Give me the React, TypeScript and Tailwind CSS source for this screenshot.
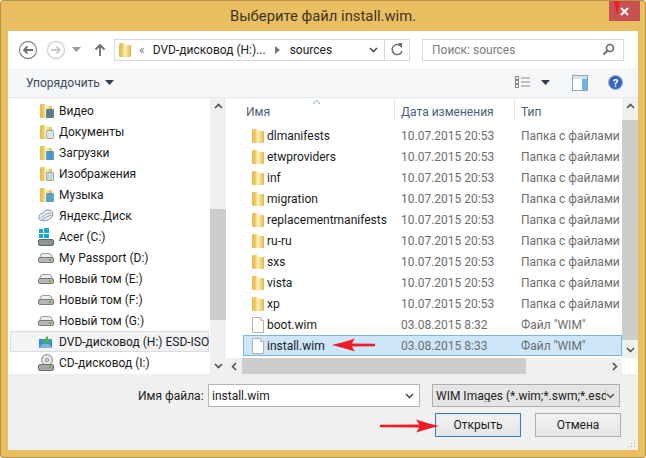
import { ReactNode } from 'react';

const FolderIcon = () => (
  <svg width="14" height="16" viewBox="0 0 14 16" className="shrink-0">
    <defs>
      <linearGradient id="folderFill" x1="0" y1="0" x2="1" y2="0">
        <stop offset="0" stopColor="#e3b94e" />
        <stop offset="0.3" stopColor="#eecb66" />
        <stop offset="0.48" stopColor="#fdf3c8" />
        <stop offset="0.7" stopColor="#f4da88" />
        <stop offset="1" stopColor="#e0b64c" />
      </linearGradient>
    </defs>
    <path d="M1 3 L1 14 Q1 15 2 15 L12 15 Q13 15 13 14 L13 4 Q13 3 12 3 L8 3 L6 1 L2 1 Q1 1 1 3Z" fill="url(#folderFill)" />
  </svg>
);

const PlacesIcon = ({ overlay }: { overlay: string }) => (
  <div className="relative w-[15px] h-[16px] shrink-0">
    <FolderIcon />
    <div className={`absolute right-0 bottom-[1px] w-[8px] h-[9px] rounded-[1px] opacity-85 ${overlay}`} />
  </div>
);

const FileIcon = () => (
  <svg width="14" height="16" viewBox="0 0 14 16" className="shrink-0">
    <path d="M1.5 0.5 H9.5 L12.5 3.5 V15.5 H1.5Z" fill="#fdfdfd" stroke="#b0b0b0" />
    <path d="M9.5 0.5 V3.5 H12.5" fill="#eee" stroke="#bdbdbd" />
  </svg>
);

const DriveIcon = () => (
  <svg width="16" height="10" viewBox="0 0 16 10" className="shrink-0">
    <path d="M2 4 Q2 0.5 5 0.5 H11 Q14 0.5 14 4 L15 6 H1Z" fill="#ededed" stroke="#9a9a9a" />
    <rect x="0.5" y="4.5" width="15" height="5" rx="1.5" fill="#b4b7b4" stroke="#777a77" />
    <rect x="11" y="6" width="2" height="2" fill="#5fb04a" />
  </svg>
);

const AcerIcon = () => (
  <svg width="16" height="18" viewBox="0 0 16 18" className="shrink-0">
    <rect x="1" y="1" width="4" height="4" fill="#16a9c9" />
    <rect x="6" y="0" width="5" height="5" fill="#16a9c9" />
    <rect x="1" y="6" width="4" height="4" fill="#16a9c9" />
    <rect x="6" y="6" width="5" height="4" fill="#16a9c9" />
    <rect x="0.5" y="11.5" width="15" height="6" rx="1.5" fill="#8b9496" stroke="#5e6668" />
  </svg>
);

const CloudIcon = () => (
  <svg width="16" height="15" viewBox="0 0 16 15" className="shrink-0">
    <path d="M1 11 Q0 6 5 5 Q7 1 11 2 Q15 3 15 6 Q15 10 10 12 Q4 14 1 11Z" fill="#e6edf2" stroke="#8598a5" />
    <path d="M3 10 Q7 5 13 5 M4 12 Q8 8 14 7" fill="none" stroke="#9aadb9" />
  </svg>
);

const DvdIcon = () => (
  <svg width="14" height="12" viewBox="0 0 14 12" className="shrink-0">
    <rect x="0" y="3" width="13" height="9" fill="#3d8fd1" />
    <path d="M0 12 L3 8 H10 L13 12Z" fill="#7cb8e4" />
    <path d="M9 0 L9 3 L12 3 L7 8 L3 5 L6 5 Q6 1 9 0Z" fill="#4cb848" />
  </svg>
);

const CdIcon = () => (
  <svg width="16" height="17" viewBox="0 0 16 17" className="shrink-0">
    <circle cx="9" cy="6" r="5.5" fill="#e4e4e4" stroke="#8a8a8a" />
    <circle cx="9" cy="6" r="1.5" fill="#fff" stroke="#888" />
    <rect x="0.5" y="10.5" width="15" height="6" rx="1.5" fill="#a5a9a5" stroke="#6e716e" />
    <rect x="11" y="12" width="2" height="2" fill="#5fb04a" />
  </svg>
);

const Caret = ({ className }: { className: string }) => (
  <svg width="9" height="5" viewBox="0 0 9 5" className={className}>
    <path d="M0 0 H9 L4.5 5Z" fill="currentColor" />
  </svg>
);

const Chevron = ({ dir }: { dir: 'up' | 'down' | 'left' | 'right' }) => {
  const d = {
    up: 'M1 6 L4.5 2.5 L8 6',
    down: 'M1 3 L4.5 6.5 L8 3',
    left: 'M6 1 L2.5 4.5 L6 8',
    right: 'M3 1 L6.5 4.5 L3 8',
  }[dir];
  return (
    <svg width="9" height="9" viewBox="0 0 9 9">
      <path d={d} fill="none" stroke="#505050" strokeWidth="1.6" />
    </svg>
  );
};

// tail tapers towards the back, head has concave barbs
const RedArrow = ({ flip, width }: { flip?: boolean; width: number }) => {
  const barb = width - 23;
  return (
    <svg width={width} height="14" viewBox={`0 0 ${width} 14`} style={{ transform: flip ? 'scaleX(-1)' : undefined }}>
      <path
        d={`M0 5.8 L${barb + 3} 5.6 Q${barb + 2} 3 ${barb} 0.5 Q${width - 9} 5 ${width} 7 Q${width - 9} 9 ${barb} 13.5 Q${barb + 2} 11 ${barb + 3} 8.4 L0 8.2Z`}
        fill="#ee1c25"
      />
    </svg>
  );
};

const navItems: { label: string; icon: ReactNode; active?: boolean }[] = [
  { label: 'Видео', icon: <PlacesIcon overlay="bg-[#3f6f8f]" /> },
  { label: 'Документы', icon: <PlacesIcon overlay="bg-[#dfe6ee] border border-[#8da2b5]" /> },
  { label: 'Загрузки', icon: <PlacesIcon overlay="bg-[#2f8fd0]" /> },
  { label: 'Изображения', icon: <PlacesIcon overlay="bg-[#b9d8e6] border border-[#8da2b5]" /> },
  { label: 'Музыка', icon: <PlacesIcon overlay="bg-[#3a9ac9]" /> },
  { label: 'Яндекс.Диск', icon: <CloudIcon /> },
  { label: 'Acer (C:)', icon: <AcerIcon /> },
  { label: 'My Passport (D:)', icon: <DriveIcon /> },
  { label: 'Новый том (E:)', icon: <DriveIcon /> },
  { label: 'Новый том (F:)', icon: <DriveIcon /> },
  { label: 'Новый том (G:)', icon: <DriveIcon /> },
  { label: 'DVD-дисковод (H:) ESD-ISO', icon: <DvdIcon />, active: true },
  { label: 'CD-дисковод (I:)', icon: <CdIcon /> },
];

const folders = ['dlmanifests', 'etwproviders', 'inf', 'migration', 'replacementmanifests', 'ru-ru', 'sxs', 'vista', 'xp'];

const FileRow = ({ name, date, type, folder, selected }: { name: string; date: string; type: string; folder?: boolean; selected?: boolean }) => (
  <div className={`flex items-center h-[21px] ml-[17px] border ${selected ? 'bg-[#cde6f9] border-[#7db4dd]' : 'border-transparent'}`}>
    <div className="w-[23px] pl-[4px] flex justify-center shrink-0">{folder ? <FolderIcon /> : <FileIcon />}</div>
    <div className="w-[134px] text-[#1a1a1a] whitespace-nowrap">{name}</div>
    <div className="w-[120px] text-[#6d6d6d] whitespace-nowrap">{date}</div>
    <div className="text-[#6d6d6d] whitespace-nowrap">{type}</div>
  </div>
);

export default function App() {
  return (
    <div className="relative w-[646px] h-[458px] overflow-hidden flex flex-col bg-[#e9bf62] border border-[#b8944a] rounded-[3px] text-[12px] leading-none text-[#1c1c1c] font-['Roboto','Open_Sans',sans-serif]">
      {/* title bar */}
      <div className="relative flex items-center justify-center h-[30px] shrink-0 text-[14.8px] text-[#3d3526]">
        Выберите файл install.wim.
        <div className="absolute right-[5px] top-0 w-[31px] h-[20px] bg-[#c75050] flex items-center justify-center">
          <svg width="9" height="9" viewBox="0 0 9 9">
            <path d="M1 1 L8 8 M8 1 L1 8" stroke="#fff" strokeWidth="2" />
          </svg>
        </div>
        <svg width="6" height="15" viewBox="0 0 6 15" className="absolute left-[613px] top-0">
          <path d="M0 0 H6 L3 15Z" fill="#ee1c25" />
        </svg>
      </div>

      <div className="flex flex-col mx-[7px] w-[630px] h-[419px] bg-[#f0f0f0]">
        {/* address bar */}
        <div className="flex items-center h-[37px] bg-white shrink-0 pl-[10px]">
          <svg width="20" height="20" viewBox="0 0 20 20" className="shrink-0">
            <circle cx="10" cy="10" r="8.5" fill="#fff" stroke="#8c8c8c" strokeWidth="1.3" />
            <path d="M15 10 H6 M9.5 6.5 L6 10 L9.5 13.5" fill="none" stroke="#6e6e6e" strokeWidth="1.8" />
          </svg>
          <svg width="20" height="20" viewBox="0 0 20 20" className="shrink-0 ml-[8px]">
            <circle cx="10" cy="10" r="8.5" fill="#fff" stroke="#cfcfcf" strokeWidth="1.3" />
            <path d="M5 10 H14 M10.5 6.5 L14 10 L10.5 13.5" fill="none" stroke="#c8c8c8" strokeWidth="1.8" />
          </svg>
          <Caret className="ml-[6px] text-[#9a9a9a] shrink-0" />
          <svg width="12" height="14" viewBox="0 0 12 14" className="ml-[13px] shrink-0">
            <path d="M6 13 V2 M1.5 6.5 L6 2 L10.5 6.5" fill="none" stroke="#6e6e6e" strokeWidth="1.8" />
          </svg>
          <div className="flex items-center ml-[8px] w-[296px] h-[22px] border border-[#d9d9d9] bg-white shrink-0">
            <div className="ml-[3px]">
              <FolderIcon />
            </div>
            <span className="ml-[7px] text-[#7a7a7a]">«</span>
            <span className="ml-[8px] whitespace-nowrap">DVD-дисковод (H:)...</span>
            <svg width="5" height="8" viewBox="0 0 5 8" className="ml-[9px] shrink-0">
              <path d="M0 0 L5 4 L0 8Z" fill="#777" />
            </svg>
            <span className="ml-[10px]">sources</span>
            <div className="ml-auto w-[9px] mr-[6px]">
              <Chevron dir="down" />
            </div>
            <div className="flex items-center justify-center w-[25px] h-full border-l border-[#d9d9d9] shrink-0">
              <svg width="13" height="13" viewBox="0 0 13 13">
                <path d="M10.5 4 A5 5 0 1 0 11 8" fill="none" stroke="#6e6e6e" strokeWidth="1.5" />
                <path d="M7 0 L11 0 L11 5Z" fill="#6e6e6e" />
              </svg>
            </div>
          </div>
          <div className="flex items-center justify-between ml-[12px] w-[202px] h-[22px] border border-[#d9d9d9] bg-white pl-[9px] pr-[8px] text-[#7d7d7d] shrink-0">
            <span>Поиск: sources</span>
            <svg width="13" height="13" viewBox="0 0 13 13">
              <circle cx="8" cy="5" r="3.5" fill="none" stroke="#6a6a6a" strokeWidth="1.7" />
              <path d="M5.5 7.5 L1.5 11.5" stroke="#6a6a6a" strokeWidth="2" />
            </svg>
          </div>
        </div>

        {/* command bar */}
        <div className="flex items-center h-[30px] bg-[#f5f6f7] border-b border-[#e4e6e8] shrink-0 pl-[18px] pr-[14px] text-[#3c4a5c]">
          <span>Упорядочить</span>
          <Caret className="ml-[5px] text-[#2e3d52]" />
          <div className="ml-auto flex items-center">
            <svg width="16" height="13" viewBox="0 0 16 13">
              <g fill="none" stroke="#8a8a8a">
                <rect x="0.5" y="0.5" width="3" height="3" />
                <rect x="0.5" y="4.5" width="3" height="3" />
                <rect x="0.5" y="8.5" width="3" height="3" />
              </g>
              <path d="M6 2 H15 M6 6 H15 M6 10 H15" stroke="#8a8a8a" />
            </svg>
            <Caret className="ml-[10px] text-[#2e3d52]" />
            <svg width="16" height="16" viewBox="0 0 16 16" className="ml-[22px]">
              <rect x="0.5" y="0.5" width="15" height="15" fill="#fff" stroke="#8fa4b5" />
              <rect x="1" y="1" width="14" height="3" fill="#d9e2ea" />
              <rect x="10" y="4" width="5" height="11" fill="#6db2e8" />
            </svg>
            <svg width="15" height="15" viewBox="0 0 15 15" className="ml-[20px] mr-[1px]">
              <circle cx="7.5" cy="7.5" r="7" fill="#3566b8" stroke="#9db4d9" />
              <text x="7.5" y="11.5" textAnchor="middle" fontSize="11" fontWeight="700" fill="#fff">?</text>
            </svg>
          </div>
        </div>

        {/* panes */}
        <div className="flex h-[276px] shrink-0 bg-white">
          <div className="flex flex-col w-[202px] shrink-0 pt-[2px] text-[#1a1a1a]">
            {navItems.map((item) => (
              <div
                key={item.label}
                className={`flex items-center h-[21px] ml-[2px] mr-[1px] pl-[27px] border whitespace-nowrap ${item.active ? 'bg-[#f3f4f6] border-[#dcdcdc]' : 'border-transparent'}`}
              >
                <div className="flex justify-center w-[16px] shrink-0">{item.icon}</div>
                <span className="ml-[5px]">{item.label}</span>
              </div>
            ))}
          </div>

          <div className="flex flex-col items-center justify-between w-[16px] bg-[#f0f0f0] shrink-0 py-[4px] relative">
            <Chevron dir="up" />
            <Chevron dir="down" />
            <div className="absolute left-0 top-[111px] w-full h-[111px] bg-[#cdcdcd]" />
          </div>

          <div className="flex flex-col flex-1 min-w-0">
            <div className="flex flex-1 min-h-0">
              <div className="flex flex-col flex-1 min-w-0">
                <div className="relative flex items-center h-[27px] shrink-0 pl-[20px] text-[#4c607a]">
                  <span className="w-[155px]">Имя</span>
                  <span className="w-[120px]">Дата изменения</span>
                  <span>Тип</span>
                  <div className="absolute left-[168px] top-0 h-[22px] border-l border-[#e5e5e5]" />
                  <div className="absolute left-[288px] top-0 h-[22px] border-l border-[#e5e5e5]" />
                  <svg width="7" height="4" viewBox="0 0 7 4" className="absolute left-[87px] top-[2px]">
                    <path d="M0 4 L3.5 0 L7 4" fill="none" stroke="#7fa6c4" />
                  </svg>
                </div>
                {folders.map((f) => (
                  <FileRow key={f} folder name={f} date="10.07.2015 20:53" type="Папка с файлами" />
                ))}
                <FileRow name="boot.wim" date="03.08.2015 8:32" type={'Файл "WIM"'} />
                <FileRow selected name="install.wim" date="03.08.2015 8:33" type={'Файл "WIM"'} />
              </div>
              <div className="relative flex flex-col items-center justify-between w-[16px] bg-[#f0f0f0] shrink-0 py-[4px]">
                <Chevron dir="up" />
                <Chevron dir="down" />
                <div className="absolute left-0 top-[22px] w-full h-[220px] bg-[#cdcdcd]" />
              </div>
            </div>
            <div className="flex items-center h-[16px] shrink-0">
              <div className="flex items-center flex-1 h-full bg-[#f0f0f0]">
                <div className="flex justify-center w-[16px] shrink-0">
                  <Chevron dir="left" />
                </div>
                <div className="w-[284px] h-full bg-[#cdcdcd]" />
                <div className="ml-auto flex justify-center w-[16px]">
                  <Chevron dir="right" />
                </div>
              </div>
              <div className="w-[16px] h-full bg-white shrink-0" />
            </div>
          </div>
        </div>

        {/* file name + buttons */}
        <div className="relative flex flex-col flex-1 pt-[10px] pl-[130px] pr-[17px]">
          <div className="flex items-center">
            <span className="w-[65px] text-right whitespace-nowrap">Имя файла:</span>
            <div className="flex items-center justify-between w-[212px] h-[23px] ml-[5px] border border-[#b4b4b4] bg-white pl-[3px] pr-[5px]">
              <span>install.wim</span>
              <Chevron dir="down" />
            </div>
            <div className="flex items-center justify-between w-[188px] h-[23px] ml-[12px] border border-[#adadad] bg-[#e5e5e5] pl-[3px] pr-[4px]">
              <span className="w-[172px] overflow-hidden whitespace-nowrap">WIM Images (*.wim;*.swm;*.esd)</span>
              <Chevron dir="down" />
            </div>
          </div>
          <div className="flex justify-end gap-[14px] mt-[6px]">
            <div className="flex items-center justify-center w-[86px] h-[24px] border border-[#3c7fb1] bg-gradient-to-b from-[#f2f2f2] to-[#e5e5e5] shadow-[inset_0_0_0_1px_#d6e8f5]">Открыть</div>
            <div className="flex items-center justify-center w-[86px] h-[24px] border border-[#adadad] bg-gradient-to-b from-[#f2f2f2] to-[#e5e5e5]">Отмена</div>
          </div>
          <svg width="9" height="9" viewBox="0 0 9 9" className="absolute right-[2px] bottom-[2px]">
            <path d="M7 1h1v1h-1z M4 4h1v1h-1z M7 4h1v1h-1z M1 7h1v1h-1z M4 7h1v1h-1z M7 7h1v1h-1z" fill="#b5b5b5" />
          </svg>
        </div>
      </div>

      {/* annotation arrows */}
      <div className="absolute left-[331px] top-[337px]">
        <RedArrow flip width={43} />
      </div>
      <div className="absolute left-[379px] top-[418px]">
        <RedArrow width={59} />
      </div>
    </div>
  );
}
